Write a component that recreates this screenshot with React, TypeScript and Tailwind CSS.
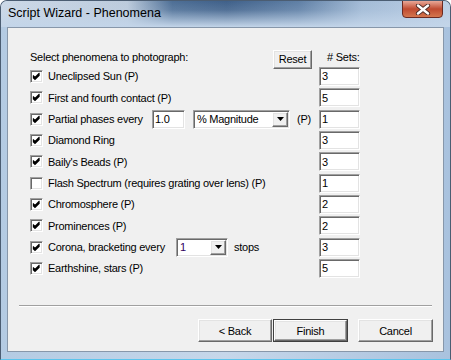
import React from 'react';

type Row = {
    kind?: 'plain' | 'partial' | 'corona';
    label?: string;
    checked: boolean;
    sets: string;
};

const rows: Row[] = [
    { label: 'Uneclipsed Sun (P)', checked: true, sets: '3' },
    { label: 'First and fourth contact (P)', checked: true, sets: '5' },
    { kind: 'partial', checked: true, sets: '1' },
    { label: 'Diamond Ring', checked: true, sets: '3' },
    { label: "Baily's Beads (P)", checked: true, sets: '3' },
    { label: 'Flash Spectrum (requires grating over lens) (P)', checked: false, sets: '1' },
    { label: 'Chromosphere (P)', checked: true, sets: '2' },
    { label: 'Prominences (P)', checked: true, sets: '2' },
    { kind: 'corona', checked: true, sets: '3' },
    { label: 'Earthshine, stars (P)', checked: true, sets: '5' },
];

const sunken =
    'border border-t-[#a0a0a0] border-l-[#a0a0a0] border-b-white border-r-white shadow-[inset_1px_1px_0_#696969,inset_-1px_-1px_0_#e3e3e3] bg-white';
const raised =
    'border border-t-white border-l-white border-b-[#696969] border-r-[#696969] shadow-[inset_-1px_-1px_0_#a0a0a0,inset_1px_1px_0_#e3e3e3] bg-[#f0f0f0]';

const CheckBox = ({ checked }: { checked: boolean }) => (
    <div className={`w-[13px] h-[13px] shrink-0 flex items-center justify-center ${sunken}`}>
        {checked && (
            <svg width="9" height="9" viewBox="0 0 9 9">
                <path d="M1 3.5 L3 5.5 L7.5 1 M1 4.5 L3 6.5 L7.5 2 M1 5.5 L3 7.5 L7.5 3" stroke="#000" strokeWidth="1.1" fill="none" />
            </svg>
        )}
    </div>
);

const TextBox = ({ value, className }: { value: string; className: string }) => (
    <div className={`h-[19px] flex items-center pl-[2px] ${sunken} ${className}`}>{value}</div>
);

const Combo = ({ value, className, valueClass }: { value: string; className: string; valueClass?: string }) => (
    <div className={`h-[19px] flex items-center pl-[3px] pr-[1px] ${sunken} ${className}`}>
        <span className={`flex-1 ${valueClass ?? ''}`}>{value}</span>
        <div className={`w-[16px] h-[15px] flex items-center justify-center ${raised}`}>
            <svg width="7" height="4" viewBox="0 0 7 4">
                <path d="M0 0 H7 L3.5 4 Z" fill="#000" />
            </svg>
        </div>
    </div>
);

const Button = ({ label, primary, className }: { label: string; primary?: boolean; className: string }) => (
    <div className={`h-[23px] ${className} ${primary ? 'border border-[#404040]' : ''}`}>
        <div className={`w-full h-full flex items-center justify-center ${raised}`}>{label}</div>
    </div>
);

// Aero glass streak behind the title text
const TitleGlass = () => (
    <svg className="absolute left-0 top-0" width="451" height="26" viewBox="0 0 451 26">
        <defs>
            <linearGradient id="tgH" x1="0" y1="0" x2="451" y2="0" gradientUnits="userSpaceOnUse">
                <stop offset="0" stopColor="#cdd9e7" />
                <stop offset="0.28" stopColor="#bccbdc" />
                <stop offset="0.38" stopColor="#4d6e95" />
                <stop offset="0.5" stopColor="#3f6089" />
                <stop offset="0.66" stopColor="#5f7fa5" />
                <stop offset="0.8" stopColor="#a3bbd6" />
                <stop offset="1" stopColor="#bdd0e6" />
            </linearGradient>
            <linearGradient id="tgV" x1="0" y1="0" x2="0" y2="26" gradientUnits="userSpaceOnUse">
                <stop offset="0" stopColor="#c3d5e9" stopOpacity="0" />
                <stop offset="0.35" stopColor="#c3d5e9" stopOpacity="0.15" />
                <stop offset="1" stopColor="#c3d5e9" stopOpacity="1" />
            </linearGradient>
        </defs>
        <rect x="0" y="0" width="451" height="26" fill="url(#tgH)" />
        <rect x="0" y="0" width="451" height="26" fill="url(#tgV)" />
    </svg>
);

export default function App() {
    return (
        <div
            className="w-[451px] h-[360px] flex flex-col rounded-t-[7px] border border-[#4b5d72] border-b-[#5cc4ec] overflow-hidden bg-linear-to-r from-[#b4cbe3] via-[#c6d7ea] to-[#a9c2de] text-black"
            style={{ fontFamily: '"Liberation Sans", Arial, sans-serif' }}
        >
            <div className="relative h-[26px] shrink-0 flex items-center pl-[7px]">
                <TitleGlass />
                <span className="relative text-[12.5px] text-black -mt-[2px]">Script Wizard - Phenomena</span>
                <div className="absolute right-[7px] -top-px w-[41px] h-[18px] rounded-b-[4px] border border-[#6b2a22] bg-linear-to-b from-[#e8a898] via-[#bf4a30] to-[#d4764e] flex items-center justify-center">
                    <svg width="16" height="11" viewBox="0 0 16 11">
                        <path d="M3 1.5 L13 9.5 M13 1.5 L3 9.5" stroke="#4a2a25" strokeWidth="4.2" strokeLinecap="round" />
                        <path d="M3 1.5 L13 9.5 M13 1.5 L3 9.5" stroke="#fff" strokeWidth="2.4" strokeLinecap="round" />
                    </svg>
                </div>
            </div>

            <div className="flex-1 mx-[6px] mb-[7px] border border-[#8797aa] bg-[#f0f0f0] flex flex-col text-[11px] tracking-[-0.25px]">
                <div className="pt-[20px] pl-[22px] pr-[83px]">
                    <div className="h-[18px] flex items-start">
                        <span className="flex-1 leading-[18px]">Select phenomena to photograph:</span>
                        <div className={`w-[39px] h-[19px] mt-[2px] flex items-center justify-center ${raised}`}>Reset</div>
                        <span className="w-[15px]" />
                        <span className="w-[33px] leading-[18px] whitespace-nowrap">
                            # Sets:
                        </span>
                    </div>

                    {rows.map((row, i) => (
                        <div key={i} className="h-[21.33px] flex items-center">
                            <div className="flex-1 flex items-center">
                                <CheckBox checked={row.checked} />
                                {row.kind === 'partial' ? (
                                    <>
                                        <span className="ml-[5px] w-[104px] whitespace-nowrap">Partial phases every</span>
                                        <TextBox value="1.0" className="w-[33px]" />
                                        <Combo value="% Magnitude" className="w-[97px] ml-[8px]" />
                                        <span className="ml-[7px]">(P)</span>
                                    </>
                                ) : row.kind === 'corona' ? (
                                    <>
                                        <span className="ml-[5px] w-[128px] whitespace-nowrap">Corona, bracketing every</span>
                                        <Combo value="1" className="w-[52px]" valueClass="text-[#300060]" />
                                        <span className="ml-[6px]">stops</span>
                                    </>
                                ) : (
                                    <span className="ml-[5px] whitespace-nowrap">{row.label}</span>
                                )}
                            </div>
                            <TextBox value={row.sets} className="w-[41px]" />
                        </div>
                    ))}
                </div>

                <div className="mt-[26px] mx-[11px] border-t border-t-[#a0a0a0] border-b border-b-white" />

                <div className="mt-[12px] flex justify-end pr-[10px]">
                    <Button label="< Back" className="w-[74px]" />
                    <Button label="Finish" primary className="w-[75px] ml-[1px]" />
                    <Button label="Cancel" className="w-[75px] ml-[10px]" />
                </div>
            </div>
        </div>
    );
}
